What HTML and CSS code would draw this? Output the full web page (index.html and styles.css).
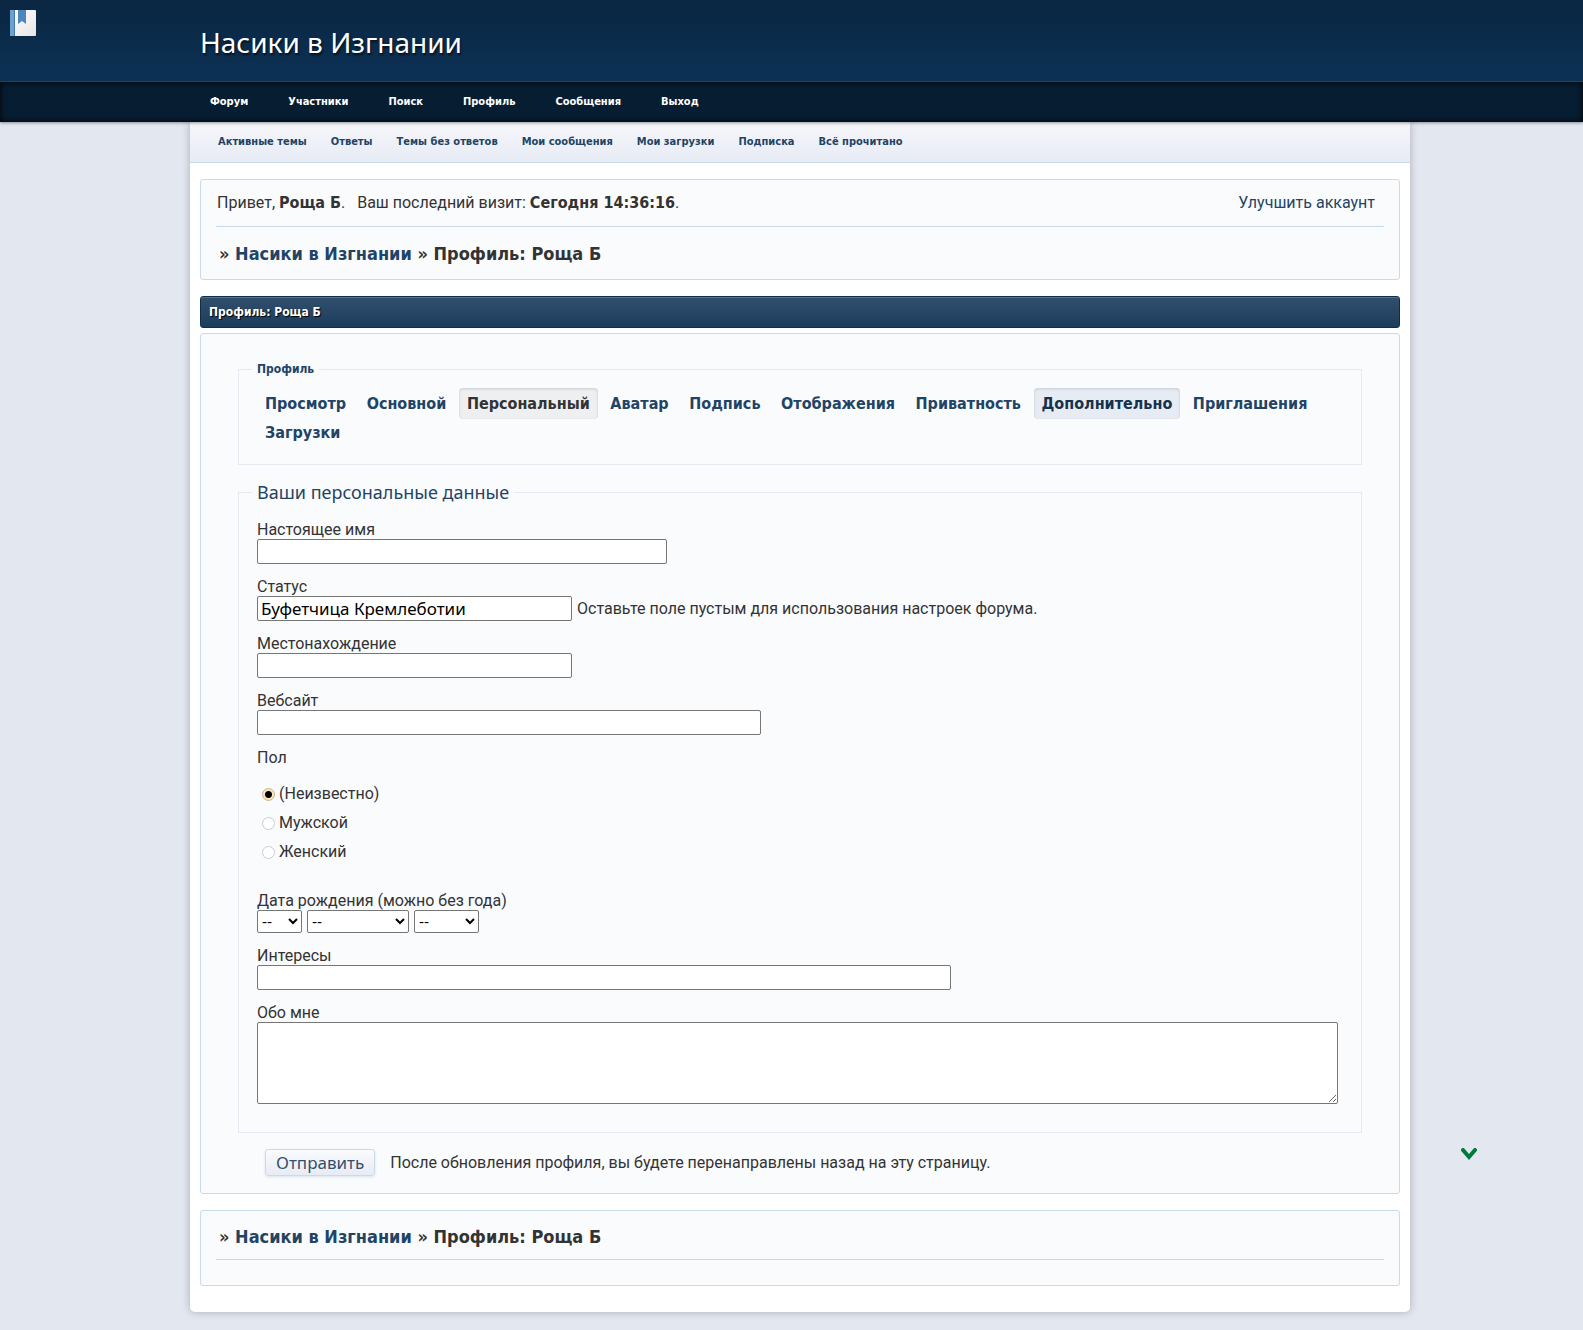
FILE: index.html
```html
<!DOCTYPE html>
<html lang="ru">

<head>
    <meta charset="UTF-8">
    <meta name="viewport" content="width=device-width, initial-scale=1.0">
    <title>Профиль: Роща Б</title>
    <link rel="stylesheet" href="styles.css">
</head>

<body>
    <a href="#" class="bookmark" aria-label="Закладки">
        <svg width="26" height="26" viewBox="0 0 26 26">
            <defs>
                <linearGradient id="page" x1="0" y1="0" x2="1" y2="1">
                    <stop offset="0" stop-color="#fff" />
                    <stop offset="1" stop-color="#e6e6e6" />
                </linearGradient>
            </defs>
            <rect width="26" height="26" rx="1" fill="url(#page)" />
            <path d="M1 0h3v26H1a1 1 0 0 1-1-1V1a1 1 0 0 1 1-1z" fill="#6f9fd0" />
            <path d="M4 0h1v26H4z" fill="#4478ad" />
            <path d="M8 0h8v14l-4-3-4 3z" fill="#4d86bf" />
        </svg>
    </a>

    <header class="header">
        <h1>Насики в Изгнании</h1>
    </header>
    <nav class="nav">
        <a href="#">Форум</a>
        <a href="#">Участники</a>
        <a href="#">Поиск</a>
        <a href="#">Профиль</a>
        <a href="#">Сообщения</a>
        <a href="#">Выход</a>
    </nav>

    <div class="wrap">
        <nav class="subnav">
            <a href="#">Активные темы</a>
            <a href="#">Ответы</a>
            <a href="#">Темы без ответов</a>
            <a href="#">Мои сообщения</a>
            <a href="#">Мои загрузки</a>
            <a href="#">Подписка</a>
            <a href="#">Всё прочитано</a>
        </nav>

        <main class="content">
            <section class="box">
                <div class="status">
                    <p>Привет, <b>Роща Б</b>. &nbsp; Ваш последний визит: <b>Сегодня 14:36:16</b>.</p>
                    <a href="#">Улучшить аккаунт</a>
                </div>
                <p class="crumbs crumbs-top">» <a href="#">Насики в Изгнании</a> » Профиль: Роща Б</p>
            </section>

            <h2 class="title">Профиль: Роща Б</h2>

            <form class="box panel" action="#" autocomplete="off">
                <fieldset class="tabs">
                    <legend>Профиль</legend>
                    <a href="#">Просмотр</a>
                    <a href="#">Основной</a>
                    <a href="#" class="active">Персональный</a>
                    <a href="#">Аватар</a>
                    <a href="#">Подпись</a>
                    <a href="#">Отображения</a>
                    <a href="#">Приватность</a>
                    <a href="#" class="hover">Дополнительно</a>
                    <a href="#">Приглашения</a>
                    <a href="#">Загрузки</a>
                </fieldset>

                <fieldset class="personal">
                    <legend>Ваши персональные данные</legend>
                    <div class="field">
                        <label for="realname">Настоящее имя</label>
                        <input type="text" id="realname" class="w-name">
                    </div>
                    <div class="field">
                        <label for="status">Статус</label>
                        <div class="row">
                            <input type="text" id="status" class="w-short" value="Буфетчица Кремлеботии">
                            <span>Оставьте поле пустым для использования настроек форума.</span>
                        </div>
                    </div>
                    <div class="field">
                        <label for="location">Местонахождение</label>
                        <input type="text" id="location" class="w-short">
                    </div>
                    <div class="field">
                        <label for="site">Вебсайт</label>
                        <input type="text" id="site" class="w-site">
                    </div>
                    <div class="field" role="radiogroup" aria-labelledby="sex">
                        <span class="label" id="sex">Пол</span>
                        <div class="radios">
                            <label><input type="radio" name="sex" checked>(Неизвестно)</label>
                            <label><input type="radio" name="sex">Мужской</label>
                            <label><input type="radio" name="sex">Женский</label>
                        </div>
                    </div>
                    <div class="field">
                        <label for="day">Дата рождения (можно без года)</label>
                        <div class="row">
                            <select id="day" class="w-day"><option>--</option></select>
                            <select class="w-month" aria-label="Месяц"><option>--</option></select>
                            <select class="w-year" aria-label="Год"><option>--</option></select>
                        </div>
                    </div>
                    <div class="field">
                        <label for="interests">Интересы</label>
                        <input type="text" id="interests" class="w-interests">
                    </div>
                    <div class="field">
                        <label for="about">Обо мне</label>
                        <textarea id="about"></textarea>
                    </div>
                </fieldset>

                <div class="submit">
                    <button type="submit">Отправить</button>
                    <span>После обновления профиля, вы будете перенаправлены назад на эту страницу.</span>
                </div>
            </form>

            <section class="box">
                <p class="crumbs crumbs-end">» <a href="#">Насики в Изгнании</a> » Профиль: Роща Б</p>
            </section>
        </main>
    </div>

    <a href="#" class="down" aria-label="Вниз">
        <svg width="16" height="13" viewBox="0 0 16 13">
            <path d="M2 2l6 7 6-7" fill="none" stroke="#007a3d" stroke-width="4" stroke-linecap="round" />
        </svg>
    </a>
</body>

</html>
```

FILE: styles.css
```css
* {
    margin: 0;
    padding: 0;
    box-sizing: border-box;
}

body {
    background: #e3e7f0;
    color: #333;
    font: 16px/18px Tahoma, Roboto, sans-serif;
}

a {
    color: #1f4465;
    text-decoration: none;
}

b,
.nav,
.subnav,
.crumbs,
.title,
.tabs {
    font-family: Tahoma, "DejaVu Sans Condensed", "DejaVu Sans", sans-serif;
}

b {
    line-height: 1;
}

.bookmark {
    position: absolute;
    left: 10px;
    top: 10px;
}

.bookmark svg,
.down svg {
    display: block;
}

.header {
    height: 82px;
    padding: 24px 200px;
    background: linear-gradient(#0a2641, #0c3155);
    border-bottom: 1px solid #27486a;
}

.header h1 {
    color: #fff;
    font-family: Tahoma, "Noto Sans", sans-serif;
    font-size: 28px;
    font-weight: 400;
    line-height: 36px;
    text-shadow: 1px 2px 2px #04121f;
}

.nav {
    position: relative;
    display: flex;
    gap: 40px;
    padding: 0 210px;
    background: #071d31;
    box-shadow: inset 0 0 6px #000, 0 1px 3px rgba(0, 0, 0, 0.4);
}

.nav a {
    color: #fff;
    font-size: 11px;
    font-weight: 700;
    line-height: 40px;
}

.wrap {
    margin: 0 173px 18px 190px;
    background: #fff;
    border-radius: 0 0 5px 5px;
    box-shadow: 0 0 8px rgba(0, 0, 0, 0.25);
}

.subnav {
    display: flex;
    gap: 24px;
    padding: 0 28px;
    background: linear-gradient(#f6f7fa, #e7ebf5);
    border-bottom: 1px solid #c9dbea;
}

.subnav a {
    font-size: 11px;
    font-weight: 700;
    line-height: 40px;
}

.content {
    padding: 16px 10px 26px;
}

.box {
    padding: 0 15px;
    background: #fafbfd;
    border: 1px solid #c9dbea;
    border-radius: 3px;
}

.status {
    display: flex;
    justify-content: space-between;
    padding: 14px 9px 14px 1px;
    border-bottom: 1px solid #c9dbea;
}

.crumbs {
    padding: 0 3px;
    font-size: 18px;
    font-weight: 700;
    line-height: 24px;
}

.crumbs-top {
    padding-top: 15px;
    padding-bottom: 13px;
}

.crumbs-end {
    padding-top: 14px;
    padding-bottom: 10px;
    margin-bottom: 25px;
    border-bottom: 1px solid #c9dbea;
}

.title {
    margin: 16px 0 5px;
    padding: 0 8px;
    border: 1px solid #122d47;
    border-radius: 3px;
    background: linear-gradient(#32506e, #1b3c5c);
    box-shadow: inset 0 1px #55718c;
    color: #fff;
    font-size: 12px;
    line-height: 30px;
    text-shadow: 1px 1px 1px #000;
}

.panel {
    margin-bottom: 16px;
    padding: 27px 37px 17px;
}

fieldset {
    border: 1px solid #e6e9f2;
}

legend {
    padding: 0 5px;
    color: #1f4465;
}

.tabs {
    height: 104px;
    padding: 11px 18px;
    font-size: 16px;
    line-height: 29px;
}

.tabs legend {
    margin-left: -5px;
    font-size: 12px;
    font-weight: 700;
    line-height: 17px;
}

.tabs a {
    padding: 6px 8px;
    border-radius: 4px;
    font-weight: 700;
}

.tabs .active,
.tabs .hover {
    box-shadow: inset 0 1px 3px rgba(0, 0, 0, 0.15);
}

.tabs .active {
    background: #eeeff1;
    color: #333;
}

.tabs .hover {
    background: #e7ecf4;
    color: #16324c;
}

.personal {
    margin-top: 15px;
    padding: 17px 18px 14px;
}

.personal legend {
    margin-left: -5px;
    font-family: Tahoma, "Noto Sans", sans-serif;
    font-size: 18px;
    line-height: 24px;
}

.field {
    margin-bottom: 14px;
}

.field > label,
.label {
    display: block;
}

.row {
    display: flex;
    align-items: center;
    gap: 5px;
}

input[type="text"],
textarea {
    display: block;
    max-width: 100%;
    border: 1px solid #767676;
    border-radius: 2px;
    background: #fff;
}

input[type="text"] {
    height: 25px;
    padding: 0 3px;
    color: #000;
    font: 17px Tahoma, "Noto Sans", sans-serif;
}

.w-name {
    width: 410px;
}

.w-short {
    width: 315px;
}

.w-site {
    width: 504px;
}

.w-interests {
    width: 694px;
}

textarea {
    width: calc(100% - 5px);
    height: 82px;
}

.radios {
    display: grid;
    gap: 11px;
    padding: 18px 5px 17px;
}

.radios label {
    display: flex;
    align-items: center;
    gap: 4px;
}

input[type="radio"] {
    appearance: none;
    width: 13px;
    height: 13px;
    border: 1px solid #ccc;
    border-radius: 50%;
    background: #fff;
}

input[type="radio"]:checked {
    border-color: #c9b58c;
    background: radial-gradient(circle, #000 3px, #fbe6c0 4px);
}

select {
    height: 23px;
    border: 1px solid #767676;
    border-radius: 2px;
    background: #fff;
    color: #000;
    font: 14px "DejaVu Sans", sans-serif;
}

.w-day {
    width: 45px;
}

.w-month {
    width: 102px;
}

.w-year {
    width: 65px;
}

.submit {
    display: flex;
    align-items: center;
    gap: 15px;
    padding: 16px 27px 0;
}

.submit button {
    height: 27px;
    padding: 0 10px;
    border: 1px solid #c9dbea;
    border-radius: 3px;
    background: linear-gradient(#fafbfd, #e7ebf5);
    box-shadow: 0 1px 3px #dde3ec;
    color: #34506c;
    font: 17px Tahoma, "Noto Sans", sans-serif;
}

.down {
    position: fixed;
    right: 106px;
    bottom: 169px;
}
```
